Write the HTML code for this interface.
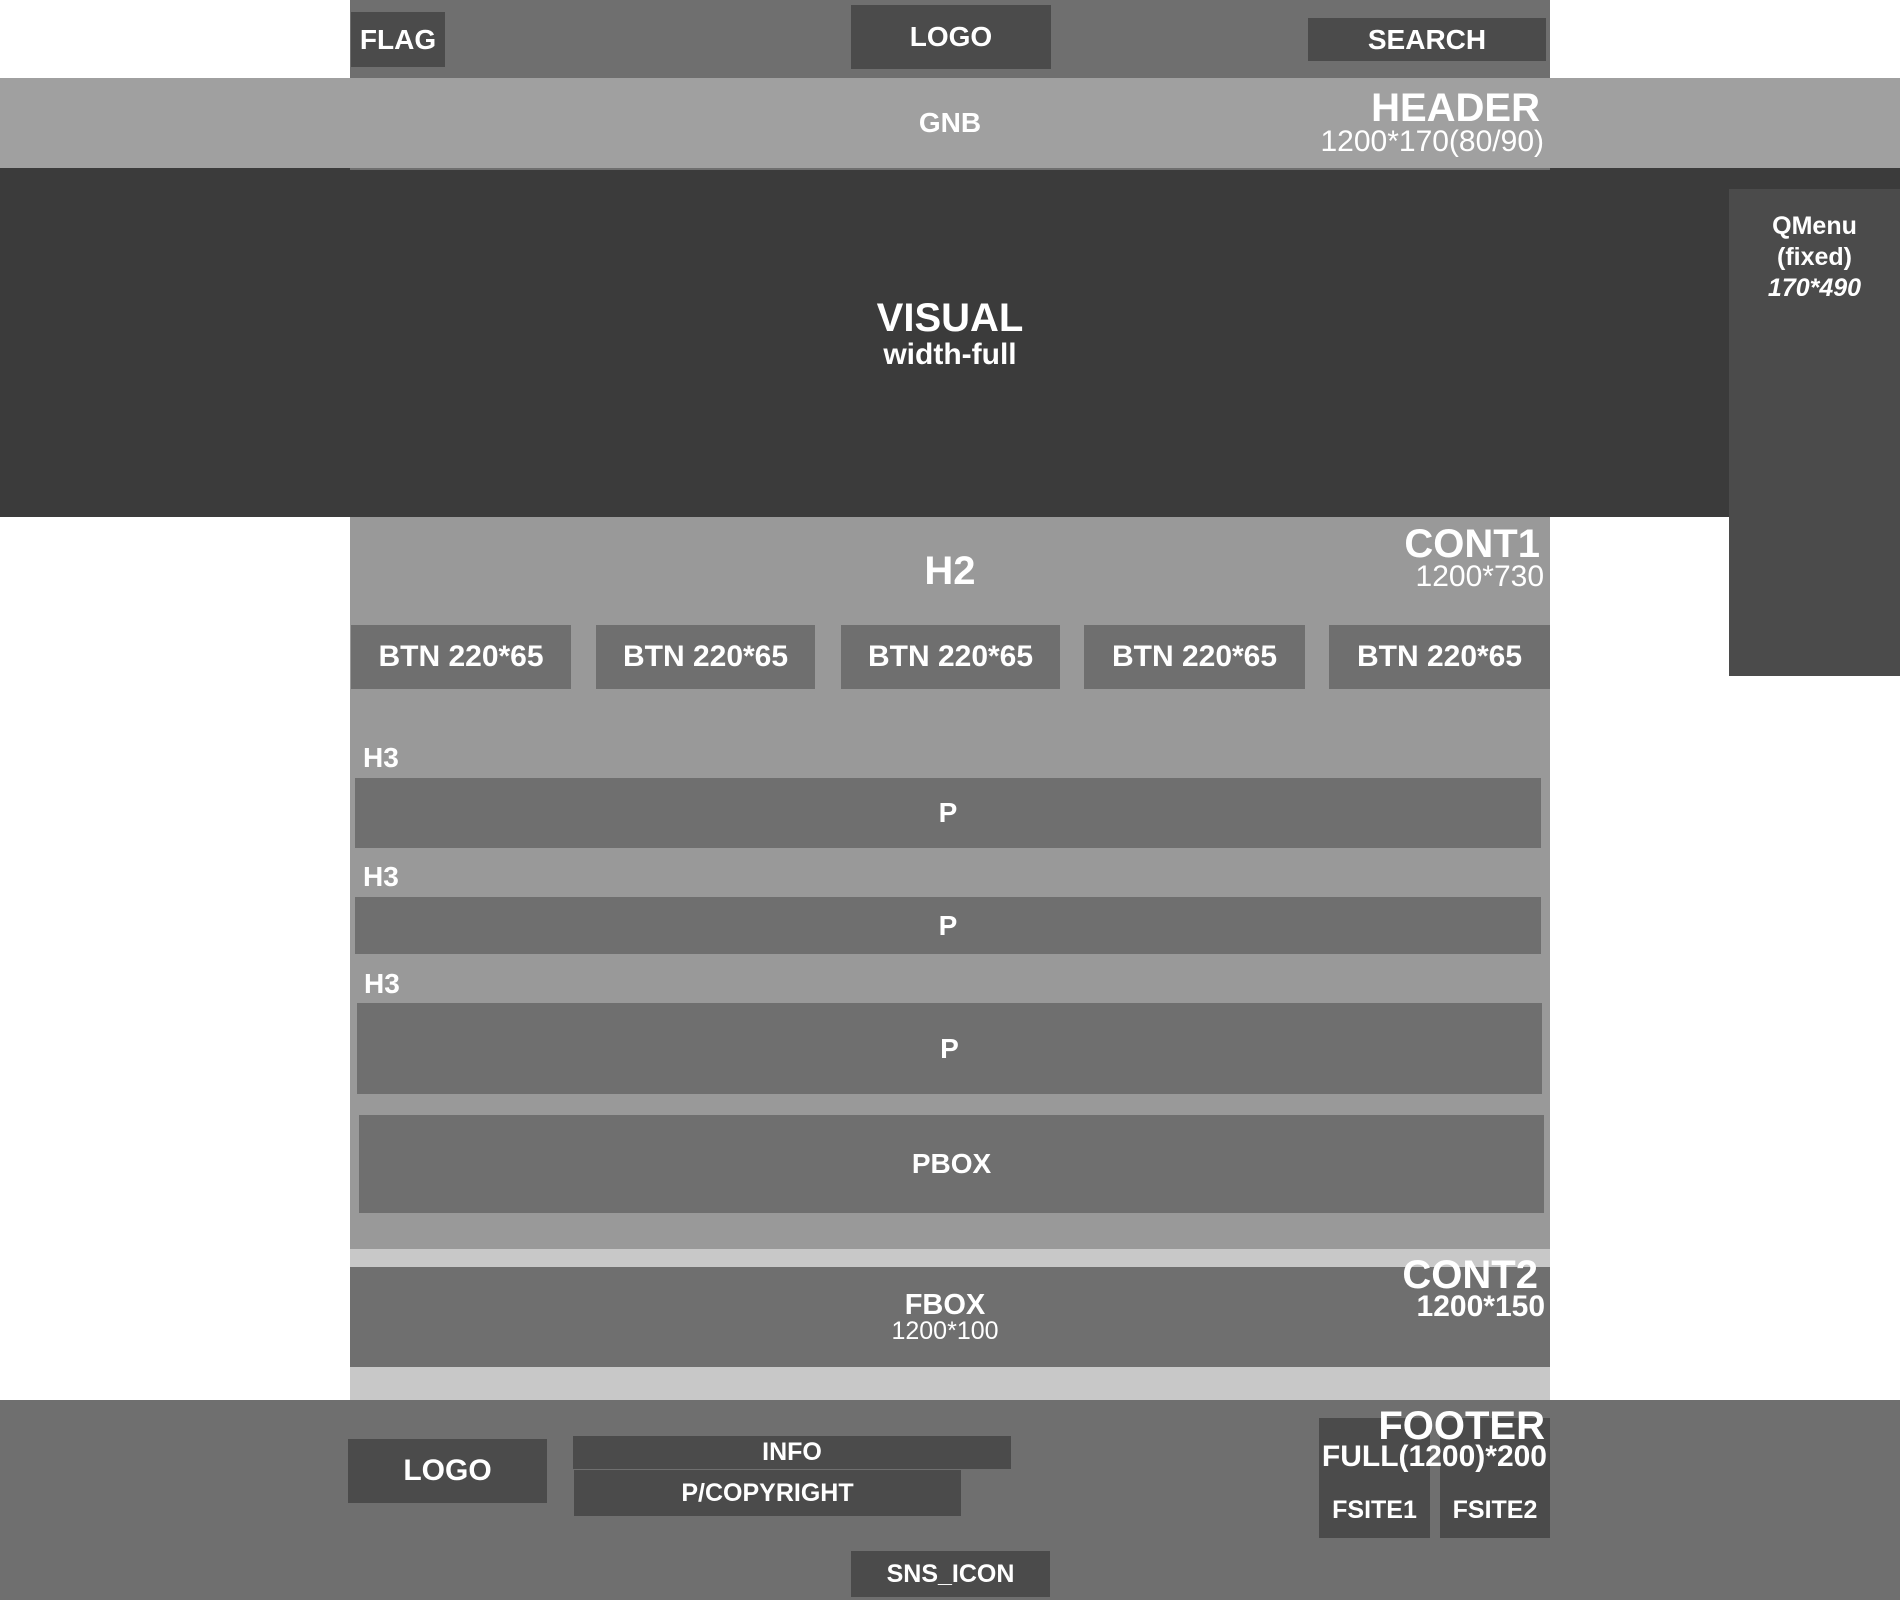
<!DOCTYPE html>
<html><head><meta charset="utf-8"><style>
*{margin:0;padding:0;box-sizing:border-box}
body{width:1900px;height:1600px;position:relative;background:#fff;overflow:hidden;font-family:"Liberation Sans Narrow","Liberation Sans",sans-serif;font-weight:bold;color:#fff}
.a{position:absolute}
.c{display:flex;align-items:center;justify-content:center;text-align:center;line-height:1}
.d{background:#4b4b4b}
.m{background:#6f6f6f}
.r{text-align:right;line-height:1}
</style></head><body>
<div class="a m" style="left:350px;top:0;width:1200px;height:78px"></div>
<div class="a d c" style="left:351px;top:12px;width:94px;height:55px;font-size:28px">FLAG</div>
<div class="a d c" style="left:851px;top:5px;width:200px;height:64px;font-size:28px">LOGO</div>
<div class="a d c" style="left:1308px;top:18px;width:238px;height:43px;font-size:28px">SEARCH</div>
<div class="a" style="left:0;top:78px;width:1900px;height:90px;background:#a0a0a0"></div>
<div class="a c" style="left:850px;top:108px;width:200px;height:30px;font-size:28px">GNB</div>
<div class="a r" style="right:360px;top:88px;font-size:40px">HEADER</div>
<div class="a r" style="right:356px;top:127px;font-size:30px;font-weight:normal">1200*170(80/90)</div>
<div class="a" style="left:0;top:168px;width:1900px;height:349px;background:#3b3b3b"></div>
<div class="a" style="left:350px;top:168px;width:1200px;height:2px;background:#6f6f6f"></div>
<div class="a" style="left:0;top:298px;width:1900px;text-align:center;font-size:40px;line-height:1">VISUAL</div>
<div class="a" style="left:0;top:340px;width:1900px;text-align:center;font-size:30px;line-height:1">width-full</div>
<div class="a d" style="left:1729px;top:189px;width:171px;height:487px"></div>
<div class="a" style="left:1729px;top:211px;width:171px;text-align:center;font-size:25px;line-height:31px">QMenu<br>(fixed)<br><i>170*490</i></div>
<div class="a" style="left:350px;top:517px;width:1200px;height:732px;background:#999"></div>
<div class="a c" style="left:850px;top:551px;width:200px;height:40px;font-size:40px">H2</div>
<div class="a r" style="right:360px;top:524px;font-size:40px">CONT1</div>
<div class="a r" style="right:356px;top:562px;font-size:30px;font-weight:normal">1200*730</div>
<div class="a m c" style="left:351px;top:625px;width:220px;height:64px;font-size:30px">BTN 220*65</div>
<div class="a m c" style="left:596px;top:625px;width:219px;height:64px;font-size:30px">BTN 220*65</div>
<div class="a m c" style="left:841px;top:625px;width:219px;height:64px;font-size:30px">BTN 220*65</div>
<div class="a m c" style="left:1084px;top:625px;width:221px;height:64px;font-size:30px">BTN 220*65</div>
<div class="a m c" style="left:1329px;top:625px;width:221px;height:64px;font-size:30px">BTN 220*65</div>
<div class="a" style="left:363px;top:744px;font-size:28px;line-height:1">H3</div>
<div class="a m c" style="left:355px;top:778px;width:1186px;height:70px;font-size:28px">P</div>
<div class="a" style="left:363px;top:863px;font-size:28px;line-height:1">H3</div>
<div class="a m c" style="left:355px;top:897px;width:1186px;height:57px;font-size:28px">P</div>
<div class="a" style="left:364px;top:970px;font-size:28px;line-height:1">H3</div>
<div class="a m c" style="left:357px;top:1003px;width:1185px;height:91px;font-size:28px">P</div>
<div class="a m c" style="left:359px;top:1115px;width:1185px;height:98px;font-size:28px">PBOX</div>
<div class="a" style="left:350px;top:1249px;width:1200px;height:151px;background:#c8c8c8"></div>
<div class="a m" style="left:350px;top:1267px;width:1200px;height:100px"></div>
<div class="a" style="left:850px;top:1291px;width:190px;text-align:center;font-size:29px;line-height:1">FBOX</div>
<div class="a" style="left:850px;top:1319px;width:190px;text-align:center;font-size:25px;line-height:1;font-weight:normal">1200*100</div>
<div class="a r" style="right:362px;top:1255px;font-size:40px">CONT2</div>
<div class="a r" style="right:355px;top:1292px;font-size:30px">1200*150</div>
<div class="a m" style="left:0;top:1400px;width:1900px;height:200px"></div>
<div class="a d c" style="left:348px;top:1439px;width:199px;height:64px;font-size:30px">LOGO</div>
<div class="a d c" style="left:573px;top:1436px;width:438px;height:33px;font-size:25px">INFO</div>
<div class="a d c" style="left:574px;top:1470px;width:387px;height:46px;font-size:25px">P/COPYRIGHT</div>
<div class="a d" style="left:1319px;top:1418px;width:111px;height:120px"></div>
<div class="a d" style="left:1440px;top:1418px;width:110px;height:120px"></div>
<div class="a c" style="left:1319px;top:1495px;width:111px;height:30px;font-size:25px">FSITE1</div>
<div class="a c" style="left:1440px;top:1495px;width:110px;height:30px;font-size:25px">FSITE2</div>
<div class="a r" style="right:355px;top:1406px;font-size:40px">FOOTER</div>
<div class="a r" style="right:353px;top:1442px;font-size:30px">FULL(1200)*200</div>
<div class="a d c" style="left:851px;top:1551px;width:199px;height:46px;font-size:25px">SNS_ICON</div>
</body></html>
